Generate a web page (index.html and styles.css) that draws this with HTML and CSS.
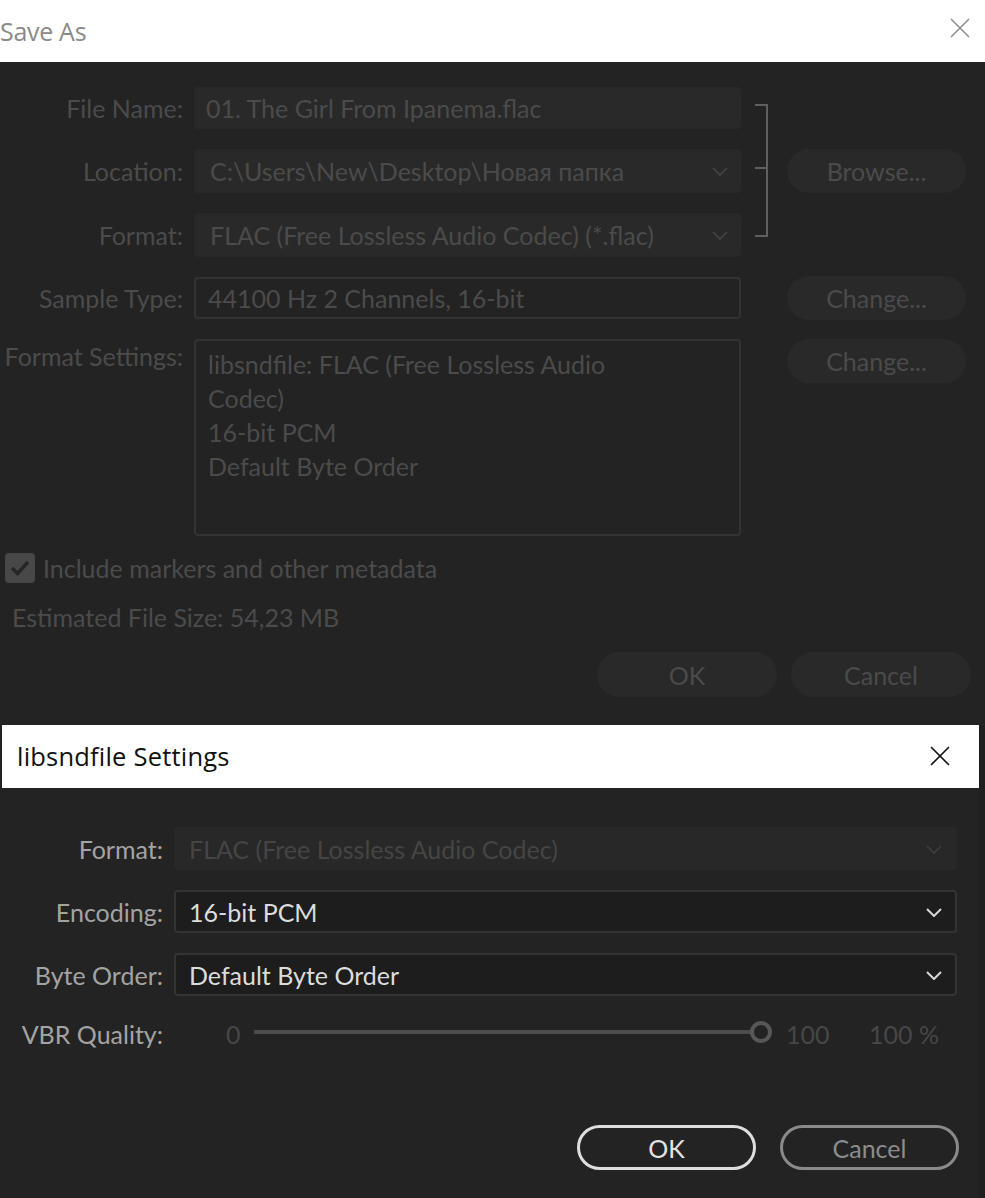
FILE: index.html
```html
<!doctype html>
<html lang="en">
<head>
<meta charset="utf-8">
<title>Save As</title>
<link rel="stylesheet" href="styles.css">
</head>
<body>

  <!-- Save As (dimmed, behind the modal) -->
  <div class="saveas">
    <div class="saveas-title">
      <span>Save As</span>
      <svg class="saveas-close" width="20" height="20" viewBox="0 0 20 20"><path d="M1 1 L19 19 M19 1 L1 19" stroke="#8c8c8c" stroke-width="1.5" fill="none"/></svg>
    </div>

    <div class="saveas-body">
      <div class="form">
        <div class="lbl">File Name:</div>
        <div class="field flat">01. The Girl From Ipanema.flac</div>

        <div class="bracket"></div>

        <div class="lbl">Location:</div>
        <div class="field flat drop">C:\Users\New\Desktop\Новая папка
          <svg class="chev" width="16" height="9" viewBox="0 0 16 9"><path d="M1 1 L8 8 L15 1" stroke="#464646" stroke-width="1.6" fill="none"/></svg>
        </div>
        <div class="pill btn-side">Browse...</div>

        <div class="lbl">Format:</div>
        <div class="field flat drop">FLAC (Free Lossless Audio Codec) (*.flac)
          <svg class="chev" width="16" height="9" viewBox="0 0 16 9"><path d="M1 1 L8 8 L15 1" stroke="#464646" stroke-width="1.6" fill="none"/></svg>
        </div>

        <div class="lbl">Sample Type:</div>
        <div class="field boxed">44100 Hz 2 Channels, 16-bit</div>
        <div class="pill btn-side">Change...</div>

        <div class="lbl top">Format Settings:</div>
        <div class="field boxed area">libsndfile: FLAC (Free Lossless Audio<br>Codec)<br>16-bit PCM<br>Default Byte Order</div>
        <div class="pill btn-side top">Change...</div>
      </div>

      <div class="check-row">
        <span class="checkbox">
          <svg width="22" height="18" viewBox="0 0 22 18"><path d="M3 9 L8.5 14.5 L19 3" stroke="#262626" stroke-width="3.5" fill="none"/></svg>
        </span>
        Include markers and other metadata
      </div>
      <div class="estimate">Estimated File Size: 54,23 MB</div>

      <div class="actions">
        <div class="pill">OK</div>
        <div class="pill">Cancel</div>
      </div>
    </div>
  </div>

  <!-- libsndfile Settings: modal window on top -->
  <div class="settings">
    <div class="settings-title">
      <span>libsndfile Settings</span>
      <svg width="20" height="20" viewBox="0 0 20 20"><path d="M1 1 L19 19 M19 1 L1 19" stroke="#111" stroke-width="1.6" fill="none"/></svg>
    </div>

    <div class="settings-body">
      <div class="sform">
        <div class="slbl">Format:</div>
        <div class="sfield off">FLAC (Free Lossless Audio Codec)
          <svg class="chev" width="16" height="9" viewBox="0 0 16 9"><path d="M1 1 L8 8 L15 1" stroke="#3e3e3e" stroke-width="1.6" fill="none"/></svg>
        </div>

        <div class="slbl">Encoding:</div>
        <div class="sfield">16-bit PCM
          <svg class="chev" width="16" height="9" viewBox="0 0 16 9"><path d="M1 1 L8 8 L15 1" stroke="#d6d6d6" stroke-width="2" fill="none"/></svg>
        </div>

        <div class="slbl">Byte Order:</div>
        <div class="sfield">Default Byte Order
          <svg class="chev" width="16" height="9" viewBox="0 0 16 9"><path d="M1 1 L8 8 L15 1" stroke="#d6d6d6" stroke-width="2" fill="none"/></svg>
        </div>

        <div class="slbl">VBR Quality:</div>
        <div class="slider-row">
          <span class="smin">0</span>
          <span class="track"><span class="knob"></span></span>
          <span class="smax">100</span>
          <span class="sval">100 %</span>
        </div>
      </div>

      <div class="sactions">
        <div class="sbtn primary">OK</div>
        <div class="sbtn">Cancel</div>
      </div>
    </div>
  </div>

</body>
</html>
```

FILE: styles.css
```css
* { box-sizing: border-box; }

body {
	margin: 0;
	background-color: #232323;
	font-family: "Lato", "Noto Sans", sans-serif;
	font-size: 25px;
	position: relative;
	height: 1198px;
	overflow: hidden;
}

/* ---------- Save As (dimmed) ---------- */

.saveas-title {
	height: 62px;
	background: #fff;
	color: #8a8a8a;
	display: flex;
	align-items: center;
	justify-content: space-between;
	padding: 0 15px 0 0;
	font-family: "Open Sans", sans-serif;
	font-size: 25px;
	letter-spacing: -.3px;
}

.saveas-close { margin-top: -6px; }

.saveas-body {
	padding: 25px 0 0 0;
	color: #4b4b4b;
}

.form {
	display: grid;
	grid-template-columns: 184px 557px 46px 179px;
	grid-template-rows: 42px 44px 44px 42px 197px;
	row-gap: 20px;
}

.lbl {
	grid-column: 1;
	text-align: right;
	align-self: center;
	white-space: nowrap;
	padding-right: 1px;
}

.lbl.top { align-self: start; padding-top: 2px; }

.field {
	grid-column: 2;
	margin-left: 10px;
	border-radius: 4px;
	display: flex;
	align-items: center;
	padding-left: 12px;
	white-space: nowrap;
	position: relative;
}

.flat { background: #292929; }

.drop { padding-left: 16px; }

.chev {
	position: absolute;
	right: 13px;
	top: 50%;
	margin-top: -4px;
}

.boxed {
	border: 2px solid #333;
	padding-left: 12px;
}

.area {
	align-items: flex-start;
	padding-top: 6px;
	line-height: 34px;
	white-space: normal;
}

.bracket {
	grid-column: 3;
	grid-row: 1 / 4;
	margin: 17px 19px 20px 14px;
	border: 2px solid #5f5f5f;
	border-left: none;
	position: relative;
}

.bracket::after {
	content: "";
	position: absolute;
	left: 0;
	right: 0;
	top: 50%;
	margin-top: -4px;
	border-top: 2px solid #5f5f5f;
}

.pill {
	background: #292929;
	border-radius: 22px;
	display: flex;
	align-items: center;
	justify-content: center;
	height: 44px;
}

.btn-side { grid-column: 4; align-self: center; }
.btn-side.top { align-self: start; }

.check-row {
	display: flex;
	align-items: center;
	margin: 17px 0 0 5px;
	gap: 8px;
}

.checkbox {
	width: 30px;
	height: 30px;
	border-radius: 4px;
	background: #484848;
	display: flex;
	align-items: center;
	justify-content: center;
}

.estimate {
	margin: 19px 0 0 12px;
}

.actions {
	display: flex;
	gap: 14px;
	justify-content: flex-end;
	padding-right: 14px;
	margin-top: 20px;
}

.actions .pill { width: 180px; height: 45px; }

/* ---------- libsndfile Settings (modal window) ---------- */

.settings {
	position: absolute;
	left: 2px;
	top: 725px;
	width: 977px;
	height: 473px;
	background: #232323;
	box-shadow: 6px 0 0 #1f1f1f;
}

.settings-title {
	height: 63px;
	background: #fff;
	color: #111;
	display: flex;
	align-items: center;
	justify-content: space-between;
	padding: 0 29px 2px 15px;
	font-family: "Open Sans", sans-serif;
	font-size: 25.5px;
	letter-spacing: .2px;
}

.settings-body {
	padding: 39px 0 0 0;
	color: #a3a3a3;
}

.sform {
	display: grid;
	grid-template-columns: 161px 783px;
	grid-template-rows: 43px 43px 43px 36px;
	column-gap: 11px;
	row-gap: 20px;
}

.slbl {
	text-align: right;
	align-self: center;
	white-space: nowrap;
}

.sfield {
	background: #1d1d1d;
	border: 2px solid #343434;
	border-radius: 4px;
	color: #dcdcdc;
	display: flex;
	align-items: center;
	padding-left: 13px;
	position: relative;
}

.sfield .chev { right: 13px; }

.sfield.off {
	background: #282828;
	border-color: #282828;
	color: #454545;
}

.slider-row {
	display: flex;
	align-items: center;
	color: #474747;
}

.smin { width: 80px; padding-left: 52px; }

.track {
	width: 508px;
	height: 4px;
	background: #4c4c4c;
	position: relative;
	margin-top: -4px;
}

.knob {
	position: absolute;
	right: -10px;
	top: -9px;
	width: 22px;
	height: 22px;
	border-radius: 50%;
	border: 4px solid #575757;
	background: #232323;
}

.smax { margin-left: 24px; width: 83px; }

.sactions {
	display: flex;
	justify-content: flex-end;
	gap: 24px;
	padding-right: 20px;
	margin-top: 73px;
}

.sbtn {
	width: 179px;
	height: 45px;
	border: 3px solid #8a8a8a;
	border-radius: 23px;
	color: #8c8c8c;
	display: flex;
	align-items: center;
	justify-content: center;
}

.sbtn.primary {
	border-color: #dedede;
	color: #e4e4e4;
}
```
